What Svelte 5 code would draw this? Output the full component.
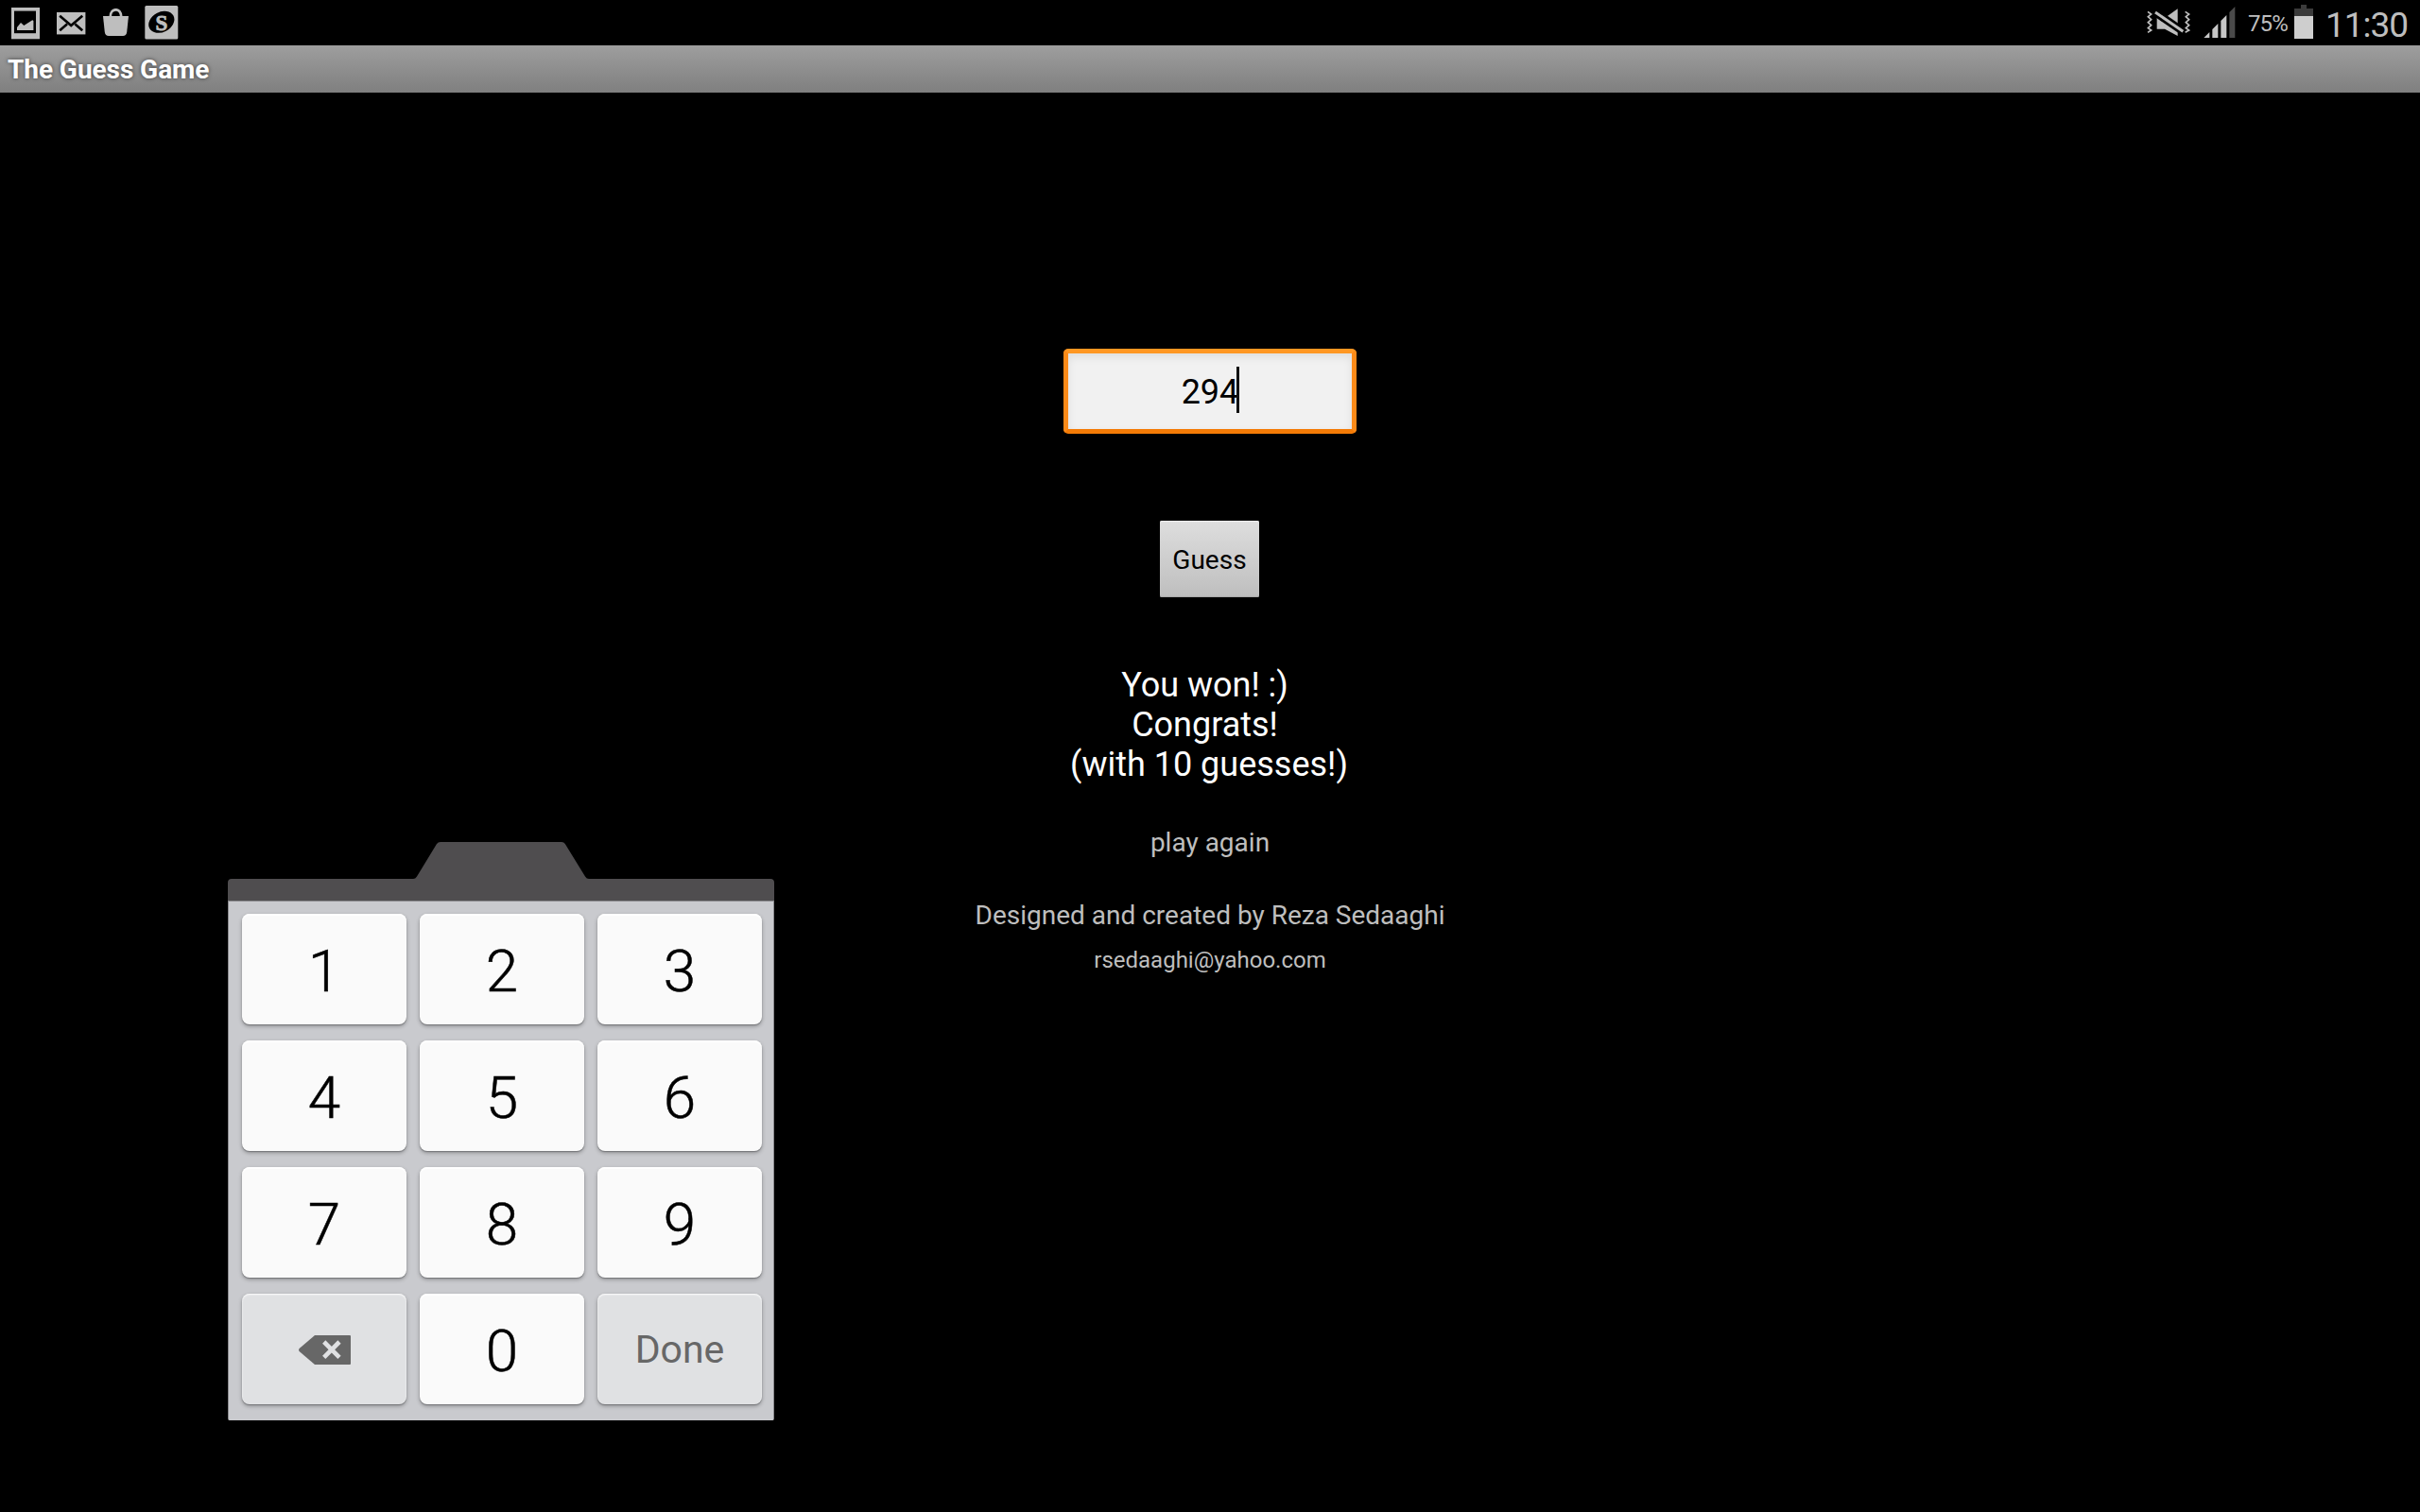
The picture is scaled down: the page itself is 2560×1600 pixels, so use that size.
<script>
  const keys = ['1', '2', '3', '4', '5', '6', '7', '8', '9', 'delete', '0', 'Done'];
  const guess = '294';
  const message = 'You won! :) \nCongrats! \n(with 10 guesses!)';
</script>

<div class="screen">
  <header class="status">
    <div class="notices">
      <svg width="30" height="34" viewBox="0 0 30 34">
        <rect width="30" height="33.3" fill="#bebebe" />
        <rect x="3" y="3.6" width="23" height="23.6" fill="#000" />
        <path d="M6 24V21L10 16L13.3 19L22.3 13.2L23.4 14V24Z" fill="#bebebe" />
      </svg>
      <svg class="mail" width="31" height="24" viewBox="0 0 31 24">
        <rect width="30.4" height="23.4" fill="#bebebe" />
        <path d="M3.2 3.7L15.2 14L27.2 3.7M3.2 19.3L11 12.5M27.2 19.3L19.4 12.5" fill="none" stroke="#000" stroke-width="2.6" />
      </svg>
      <svg class="bag" width="28" height="30" viewBox="0 0 28 30">
        <path d="M0 8H27L25.2 25Q24.7 29 21 29H6Q2.300 29 1.800 25Z" fill="#bebebe" />
        <path d="M7.700 9C7.700 -1.300 19.300 -1.300 19.300 9" fill="none" stroke="#bebebe" stroke-width="2.700" />
      </svg>
      <svg class="coin" width="36" height="36" viewBox="0 0 36 36">
        <rect x=".3" width="35" height="35.500" rx="1.500" fill="#bebebe" />
        <ellipse cx="17.800" cy="17.300" rx="14.300" ry="10.600" transform="rotate(-28 17.800 17.300)" fill="#000" />
        <text x="17.900" y="25.500" text-anchor="middle" class="coin-letter">S</text>
      </svg>
    </div>

    <div class="indicators">
      <svg class="mute" width="46" height="32" viewBox="63 25 138 96">
        <path d="M95 58H120L161 29V115L120 93H95Z" fill="#bebebe" />
        <path d="M84 36L184 105" stroke="#000" stroke-width="25" />
        <path d="M90 40L178 101" stroke="#bebebe" stroke-width="9" />
        <path d="M66 38L77 46L67 54L77 63L67 72L77 81L67 90L77 97L66 104" fill="none" stroke="#bebebe" stroke-width="5" />
        <path d="M185 38L197 46L187 54L197 63L187 72L197 81L187 90L197 97L185 104" fill="none" stroke="#bebebe" stroke-width="5" />
      </svg>
      <svg class="signal" width="34" height="34" viewBox="242 21 102 102">
        <path d="M243 120L261 102V120ZM270 120V93L288 75V120ZM297 120V66L315 48V120Z" fill="#c6c6c6" />
        <path d="M324 120V39L342 21V120Z" fill="#4a4a4a" />
      </svg>
      <span class="percent">75%</span>
      <svg class="battery" width="20" height="36" viewBox="0 0 20 36">
        <path d="M7 0H13V4H20V12H0V4H7Z" fill="#3b3b3b" />
        <rect y="12" width="20" height="24" fill="#cecece" />
      </svg>
      <span class="clock">11:30</span>
    </div>
  </header>

  <div class="title">The Guess Game</div>

  <main>
    <div class="field"><span>{guess}</span><i class="caret"></i></div>
    <button class="guess">Guess</button>
    <p class="message">{message}</p>
    <p class="again">play again</p>
    <p class="credit">Designed and created by Reza Sedaaghi</p>
    <p class="email">rsedaaghi@yahoo.com</p>
  </main>

  <section class="keyboard">
    <svg class="handle" width="578" height="62" viewBox="0 0 578 62">
      <path d="M0 62V43Q0 39 4 39H196Q198.500 39 200 36.500L221 2Q222.300 0 225 0H353Q355.500 0 356.800 2L378 36.500Q379.500 39 382 39H574Q578 39 578 43V62Z" fill="#4f4d4f" />
    </svg>
    <div class="keys">
      {#each keys as key}
        {#if key === 'delete'}
          <button class="key action" aria-label="Delete">
            <svg class="backspace" width="55" height="31" viewBox="0 0 55 31">
              <path d="M17 0H54Q55 0 55 1V30Q55 31 54 31H17L.6 17Q-.5 15.500 .6 14Z" fill="#676767" />
              <path d="M26.700 7L43 23.300M43 7L26.700 23.300" stroke="#e0e1e3" stroke-width="4.600" />
            </svg>
          </button>
        {:else}
          <button class="key" class:action={key === 'Done'}>{key}</button>
        {/if}
      {/each}
    </div>
  </section>
</div>

<style>
  :global(body) {
    margin: 0;
    background: #000;
  }
  .screen {
    position: relative;
    width: 2560px;
    height: 1600px;
    overflow: hidden;
    background: #000;
    font-family: Roboto, sans-serif;
  }
  svg {
    display: block;
    flex: none;
  }
  p {
    margin: 0;
  }
  button {
    border: 0;
    padding: 0;
    font-family: inherit;
  }
  .status {
    display: flex;
    justify-content: space-between;
    height: 48px;
    color: #bebebe;
  }
  .notices,
  .indicators {
    display: flex;
    align-items: flex-start;
  }
  .notices {
    padding: 7.6px 0 0 12px;
  }
  .mail {
    margin: 5px 0 0 18px;
  }
  .bag {
    margin: 1.4px 0 0 18px;
  }
  .coin {
    margin: -1.400px 0 0 16px;
  }
  .coin-letter {
    font: 700 23px 'Liberation Serif', serif;
    fill: #bebebe;
    stroke: #bebebe;
    stroke-width: 0.8px;
  }
  .indicators {
    width: 289px;
  }
  .mute {
    margin-top: 8px;
  }
  .signal {
    margin: 7px 0 0 14px;
  }
  .percent {
    width: 50px;
    margin: 11px 0 0 13px;
    font-size: 24px;
    line-height: 28px;
    letter-spacing: -0.9px;
  }
  .battery {
    margin: 5px 0 0 -1px;
  }
  .clock {
    margin: 5px 0 0 13px;
    font-size: 37px;
    line-height: 43px;
    letter-spacing: -1px;
  }
  .title {
    height: 50px;
    padding-left: 8px;
    box-sizing: border-box;
    background: linear-gradient(#9e9e9e, #7f7f7f);
    color: #fff;
    font-size: 28px;
    font-weight: 700;
    line-height: 51px;
    letter-spacing: -0.06px;
    text-shadow: 0 0 4px rgba(0, 0, 0, 0.6);
  }
  main {
    display: flex;
    flex-direction: column;
    align-items: center;
    padding-top: 271px;
    color: #bebebe;
    font-size: 28px;
    line-height: 33px;
    white-space: pre;
  }
  .field {
    display: flex;
    align-items: center;
    justify-content: center;
    width: 310px;
    height: 90px;
    box-sizing: border-box;
    border: 5px solid;
    border-color: #ff9722 #fb8a18 #f47b06;
    border-radius: 5px;
    background: #f1f1f1;
    box-shadow: inset 0 4px 10px rgba(0, 0, 0, 0.08);
    color: #000;
    font-size: 36px;
  }
  .field span {
    padding-top: 2px;
  }
  .caret {
    width: 3px;
    height: 49px;
    margin: -3px -1px 0 -2px;
    background: #111;
  }
  .guess {
    width: 105px;
    height: 81px;
    margin: 92px 1px 0 0;
    padding: 2px 0 0;
    border-radius: 2px;
    background: linear-gradient(#dedede, #bebebe);
    box-shadow: inset 0 1px 1px #f0f0f0, inset 0 -1px 1px #a8a8a8;
    color: #000;
    font-size: 28px;
    line-height: 33px;
  }
  .message {
    margin: 72px 2px 0 0;
    color: #fff;
    font-size: 36px;
    line-height: 42px;
    text-align: center;
  }
  .again {
    margin-top: 45px;
  }
  .credit {
    margin-top: 44px;
  }
  .email {
    margin-top: 17px;
    font-size: 24px;
    line-height: 28px;
  }
  /* The floating keypad lies over the game. */
  .keyboard {
    position: absolute;
    left: 241px;
    top: 891px;
    width: 578px;
  }
  .keys {
    display: grid;
    grid-template-columns: repeat(3, 174px);
    grid-auto-rows: 117px;
    gap: 17px 14px;
    height: 550px;
    box-sizing: border-box;
    padding: 13px 0 0 14px;
    border: 1px solid #8b8b8e;
    border-bottom-color: #c9cace;
    border-radius: 0 0 2px 2px;
    background: #c9cace;
  }
  .key {
    padding: 3px 0 0;
    border-radius: 8px;
    background: #fafafa;
    box-shadow: inset 0 2px 1px #fff, 0 1px 1px #77787b, 0 2px 4px rgba(0, 0, 0, 0.3);
    color: #000;
    font-size: 62px;
    font-weight: 300;
    line-height: 73px;
    -webkit-text-stroke: 0.5px #000;
  }
  .action {
    padding: 1px 0 0;
    background: #e0e1e3;
    box-shadow: inset 0 1px 2px #fff, 0 1px 1px #77787b, 0 2px 4px rgba(0, 0, 0, 0.3);
    color: #676767;
    font-size: 41px;
    font-weight: 400;
    -webkit-text-stroke: 0;
  }
  .backspace {
    margin: 1px 0 0 60px;
  }
</style>
